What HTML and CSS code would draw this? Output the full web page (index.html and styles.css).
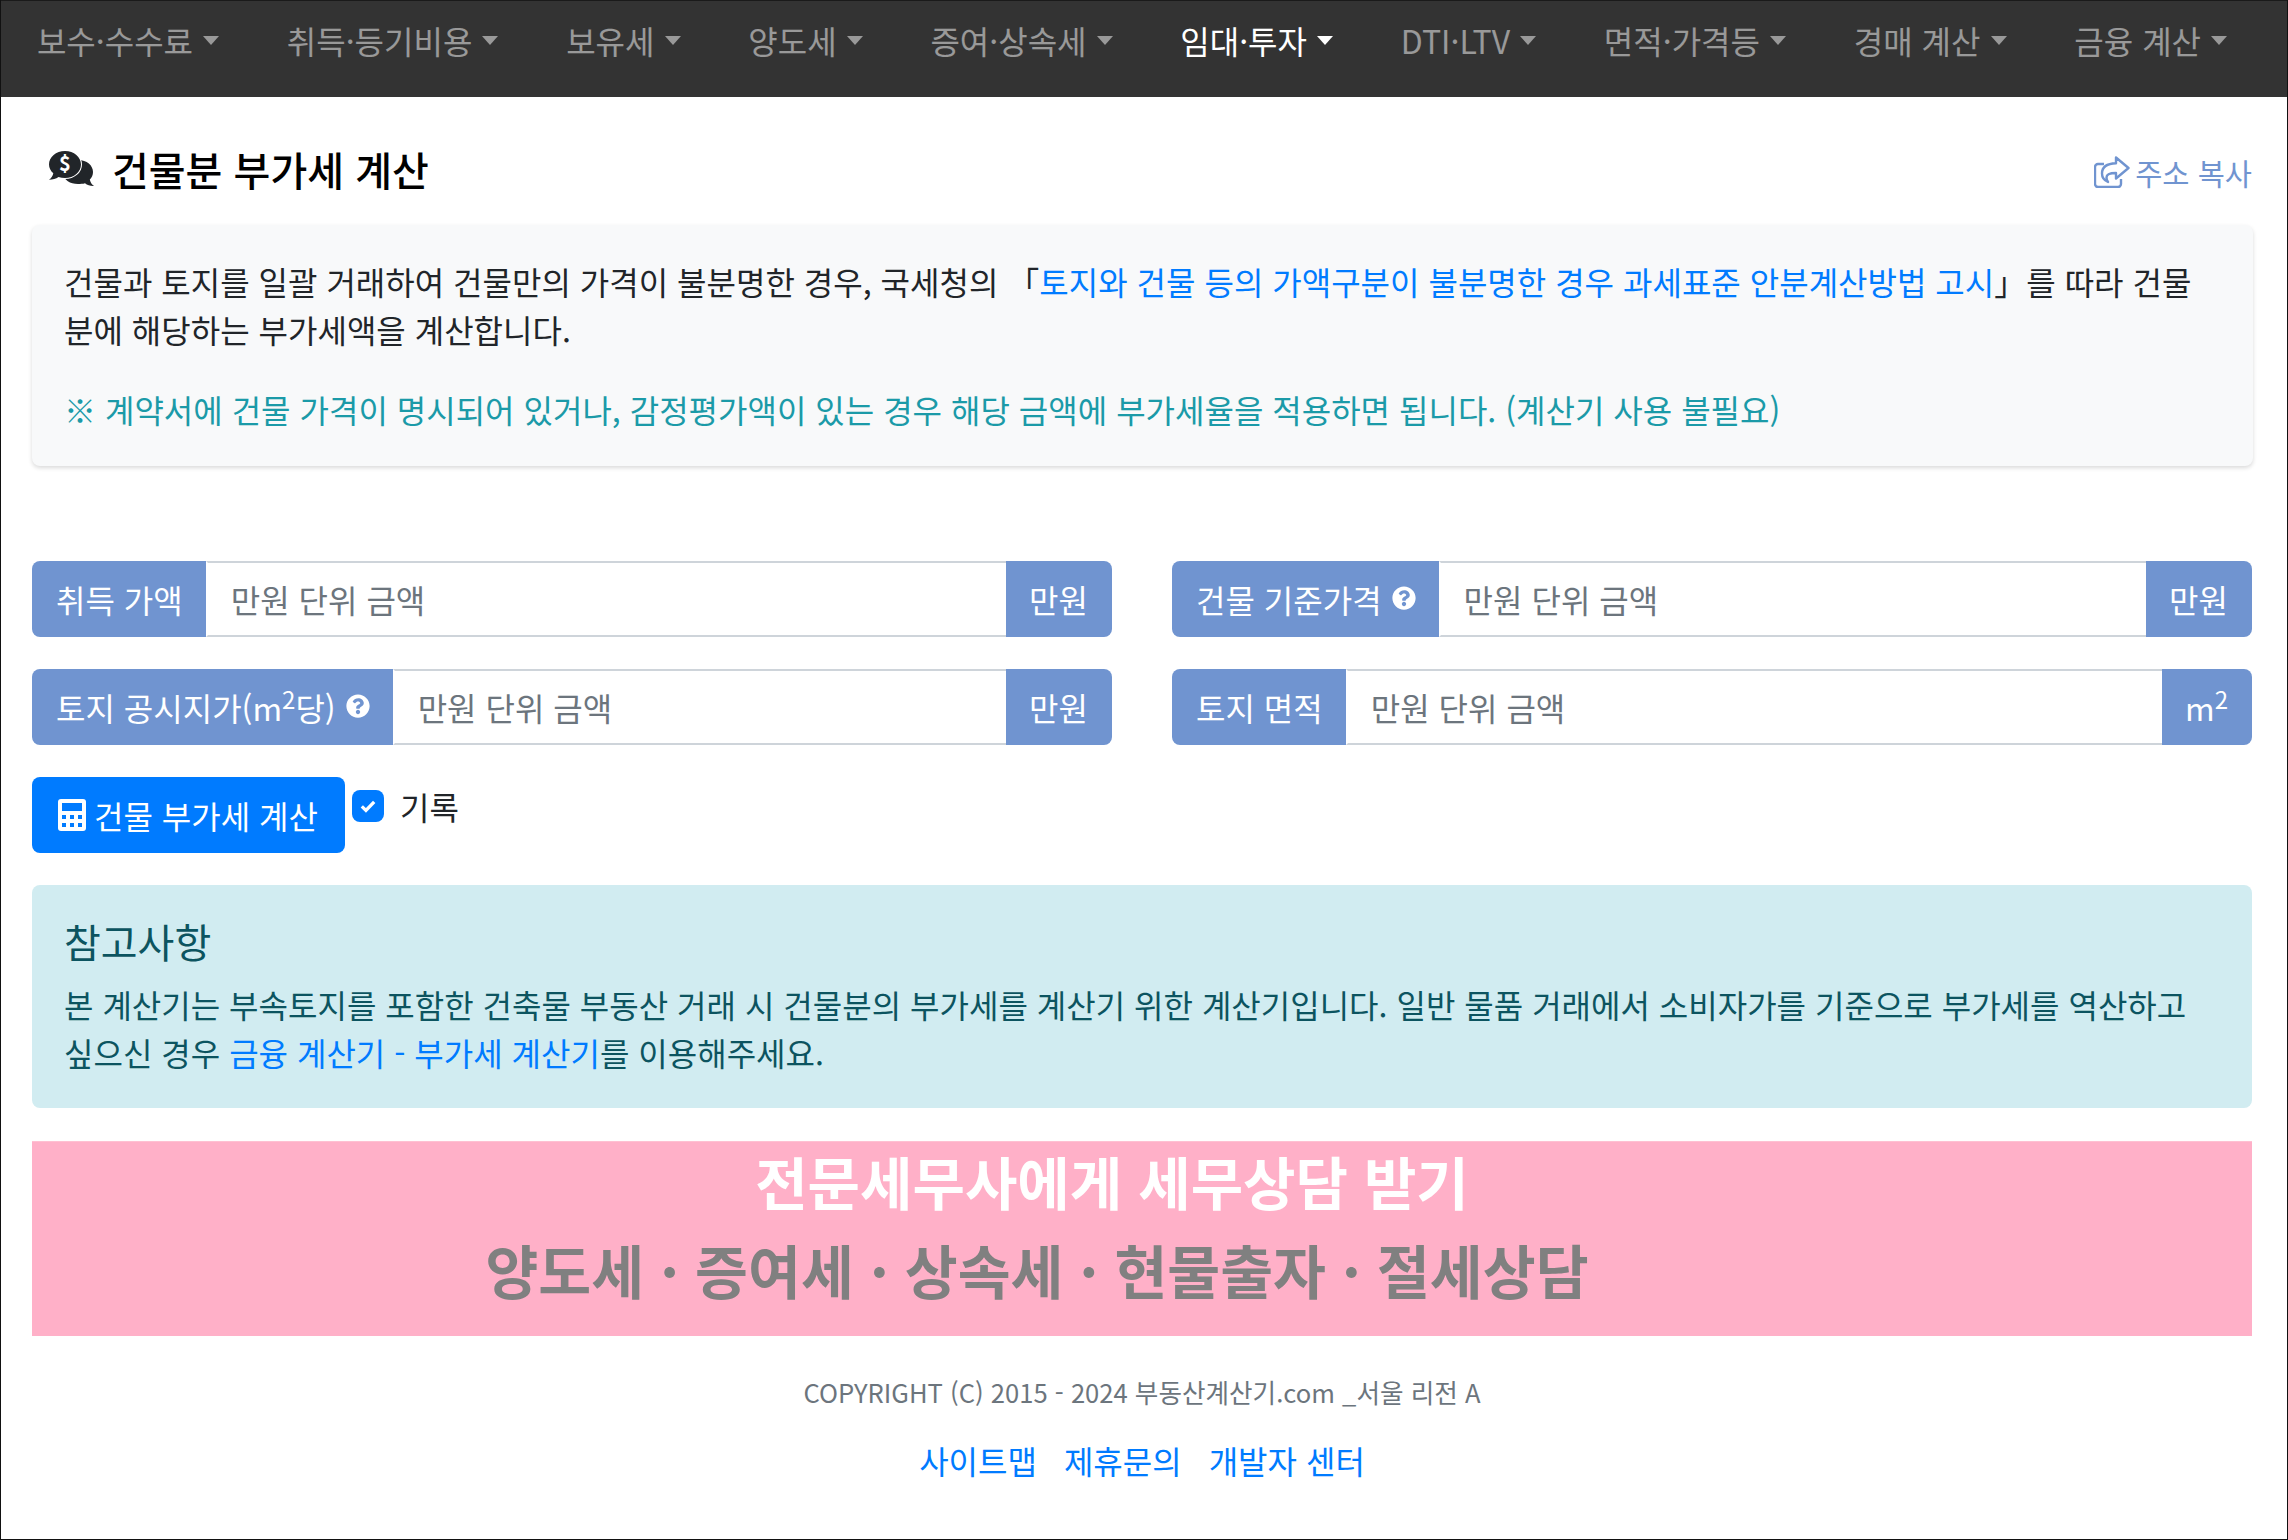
FILE: index.html
```html
<!DOCTYPE html>
<html lang="ko">
<head>
<meta charset="utf-8">
<title>건물분 부가세 계산</title>
<link rel="stylesheet" href="styles.css">
</head>
<body>
<nav class="navbar">
  <a class="nav-link" href="#">보수·수수료</a>
  <a class="nav-link" href="#">취득·등기비용</a>
  <a class="nav-link" href="#">보유세</a>
  <a class="nav-link" href="#">양도세</a>
  <a class="nav-link" href="#">증여·상속세</a>
  <a class="nav-link active" href="#">임대·투자</a>
  <a class="nav-link" href="#">DTI·LTV</a>
  <a class="nav-link" href="#">면적·가격등</a>
  <a class="nav-link" href="#">경매 계산</a>
  <a class="nav-link" href="#">금융 계산</a>
</nav>
<main class="main">
  <header class="title-row">
    <h1 class="title">
      <svg class="title-icon" viewBox="0 0 45 36" aria-hidden="true">
        <path class="bubble-dark" d="M29 9c9 0 15 5.500 15 12 0 3-1.200 5.500-3.200 7.500.4 2.500 2 5 4.200 6.500-3.500.2-6.700-1-9-2.800-2 .6-4.600.8-7 .8-8 0-14-4-15-10z"/>
        <path class="bubble-gap" d="M16 0c9 0 16 6 16 13.500S25 27 16 27c-2.300 0-4.500-.3-6.500-1-2.500 1.800-5.800 2.800-9.500 2.800 2.300-1.600 4-4 4.300-6.500C1.700 20 0 17 0 13.500 0 6 7 0 16 0z"/>
        <text class="dollar" x="16" y="20" text-anchor="middle">$</text>
      </svg>
      <span>건물분 부가세 계산</span>
    </h1>
    <a class="copy-link" href="#">
      <svg class="copy-icon" viewBox="0 0 36 32" aria-hidden="true">
        <path d="M10 8H4a3 3 0 0 0-3 3v17a3 3 0 0 0 3 3h20a3 3 0 0 0 3-3v-5" fill="none" stroke="currentColor" stroke-width="2.400"/>
        <path d="M22 1.500 34.500 12 22 22.500V17c-5.500 0-9.500 1-9.500 4.500 0 1.500.5 3 1.500 4.500-3.500-1.500-6-5-6-8.500C8 10 15 7.500 22 7.300z" fill="none" stroke="currentColor" stroke-width="2.400" stroke-linejoin="round"/>
      </svg>
      <span>주소 복사</span>
    </a>
  </header>

  <section class="intro-card">
    <p class="intro-text">건물과 토지를 일괄 거래하여 건물만의 가격이 불분명한 경우, 국세청의 「<a class="link" href="#">토지와 건물 등의 가액구분이 불분명한 경우 과세표준 안분계산방법 고시</a>」를 따라 건물분에 해당하는 부가세액을 계산합니다.</p>
    <p class="intro-note">※ 계약서에 건물 가격이 명시되어 있거나, 감정평가액이 있는 경우 해당 금액에 부가세율을 적용하면 됩니다. (계산기 사용 불필요)</p>
  </section>

  <form class="calc-form">
    <div class="input-group">
      <span class="addon addon-left"><span>취득 가액</span></span>
      <input class="field" type="text" placeholder="만원 단위 금액">
      <span class="addon addon-right"><span>만원</span></span>
    </div>
    <div class="input-group">
      <span class="addon addon-left"><span>건물 기준가격</span>
        <svg class="help-icon" viewBox="0 0 512 512" aria-hidden="true"><path d="M504 256c0 136.997-111.043 248-248 248S8 392.997 8 256C8 119.083 119.043 8 256 8s248 111.083 248 248zM262.655 90c-54.497 0-89.255 22.957-116.549 63.758-3.536 5.286-2.353 12.415 2.715 16.258l34.699 26.31c5.205 3.947 12.621 3.008 16.665-2.122 17.864-22.658 30.113-35.797 57.303-35.797 20.429 0 45.698 13.148 45.698 32.958 0 14.976-12.363 22.667-32.534 33.976C247.128 238.528 216 254.941 216 296v4c0 6.627 5.373 12 12 12h56c6.627 0 12-5.373 12-12v-1.333c0-28.462 83.186-29.647 83.186-106.667 0-58.002-60.165-102-116.531-102zM256 338c-25.365 0-46 20.635-46 46 0 25.364 20.635 46 46 46s46-20.636 46-46c0-25.365-20.635-46-46-46z"/></svg>
      </span>
      <input class="field" type="text" placeholder="만원 단위 금액">
      <span class="addon addon-right"><span>만원</span></span>
    </div>
    <div class="input-group">
      <span class="addon addon-left"><span>토지 공시지가(m<sup>2</sup>당)</span>
        <svg class="help-icon" viewBox="0 0 512 512" aria-hidden="true"><path d="M504 256c0 136.997-111.043 248-248 248S8 392.997 8 256C8 119.083 119.043 8 256 8s248 111.083 248 248zM262.655 90c-54.497 0-89.255 22.957-116.549 63.758-3.536 5.286-2.353 12.415 2.715 16.258l34.699 26.31c5.205 3.947 12.621 3.008 16.665-2.122 17.864-22.658 30.113-35.797 57.303-35.797 20.429 0 45.698 13.148 45.698 32.958 0 14.976-12.363 22.667-32.534 33.976C247.128 238.528 216 254.941 216 296v4c0 6.627 5.373 12 12 12h56c6.627 0 12-5.373 12-12v-1.333c0-28.462 83.186-29.647 83.186-106.667 0-58.002-60.165-102-116.531-102zM256 338c-25.365 0-46 20.635-46 46 0 25.364 20.635 46 46 46s46-20.636 46-46c0-25.365-20.635-46-46-46z"/></svg>
      </span>
      <input class="field" type="text" placeholder="만원 단위 금액">
      <span class="addon addon-right"><span>만원</span></span>
    </div>
    <div class="input-group">
      <span class="addon addon-left"><span>토지 면적</span></span>
      <input class="field" type="text" placeholder="만원 단위 금액">
      <span class="addon addon-right"><span>m<sup>2</sup></span></span>
    </div>
  </form>

  <div class="action-row">
    <button class="btn-primary" type="button">
      <svg class="calc-icon" viewBox="0 0 448 512" aria-hidden="true">
        <rect width="448" height="512" rx="48" fill="#fff"/>
        <rect x="64" y="64" width="320" height="128" fill="#007bff"/>
        <rect x="64" y="256" width="64" height="64" fill="#007bff"/>
        <rect x="192" y="256" width="64" height="64" fill="#007bff"/>
        <rect x="320" y="256" width="64" height="64" fill="#007bff"/>
        <rect x="64" y="384" width="64" height="64" fill="#007bff"/>
        <rect x="192" y="384" width="64" height="64" fill="#007bff"/>
        <rect x="320" y="384" width="64" height="64" fill="#007bff"/>
      </svg>
      <span>건물 부가세 계산</span>
    </button>
    <label class="record">
      <span class="checkbox">
        <svg viewBox="0 0 16 16" aria-hidden="true"><path d="M3.500 8.300 6.500 11.200 12.500 5" fill="none" stroke="#fff" stroke-width="2.400"/></svg>
      </span>
      <span>기록</span>
    </label>
  </div>

  <section class="notice">
    <h2 class="notice-title">참고사항</h2>
    <p class="notice-text">본 계산기는 부속토지를 포함한 건축물 부동산 거래 시 건물분의 부가세를 계산기 위한 계산기입니다. 일반 물품 거래에서 소비자가를 기준으로 부가세를 역산하고 싶으신 경우 <a class="link" href="#">금융 계산기 - 부가세 계산기</a>를 이용해주세요.</p>
  </section>

  <a class="banner" href="#">
    <span class="banner-top">전문세무사에게 세무상담 받기</span>
    <span class="banner-bottom">양도세 · 증여세 · 상속세 · 현물출자 · 절세상담</span>
  </a>

  <footer class="footer">
    <p class="copyright">COPYRIGHT (C) 2015 - 2024 부동산계산기.com _서울 리전 A</p>
    <p class="footer-links">
      <a class="link" href="#">사이트맵</a>
      <a class="link" href="#">제휴문의</a>
      <a class="link" href="#">개발자 센터</a>
    </p>
  </footer>
</main>
</body>
</html>
```

FILE: styles.css
```css
* { box-sizing: border-box; }
html, body { margin: 0; padding: 0; }
body {
  height: 1540px;
  overflow: hidden;
  border: 1px solid #111;
  border-top: 0;
  background: #fff;
  color: #212529;
  font-family: "Noto Sans CJK KR", "Noto Sans", sans-serif;
  font-size: 32px;
  line-height: 48px;
}
p { margin: 0; }
a { text-decoration: none; }
.link { color: #007bff; }
sup { font-size: 75%; line-height: 0; position: relative; top: -0.5em; vertical-align: baseline; }

.navbar {
  display: flex;
  align-items: center;
  height: 97px;
  padding: 0 0 18px 2px;
  background: #333;
  border-top: 1px solid #1a1a1a;
}
.nav-link {
  display: flex;
  align-items: center;
  padding: 0 33.900px;
  color: rgba(255, 255, 255, 0.5);
  white-space: nowrap;
}
.nav-link::after {
  content: "";
  margin-left: 10px;
  border-top: 9px solid currentColor;
  border-left: 8px solid transparent;
  border-right: 8px solid transparent;
}
.nav-link.active { color: #fff; }

.main { padding: 48px 35px 0 31px; }

.title-row { display: flex; justify-content: space-between; align-items: flex-start; height: 80px; }
.title {
  display: flex;
  align-items: center;
  gap: 18px;
  margin: 0 0 0 17px;
  font-size: 40px;
  font-weight: 500;
  line-height: 48px;
  color: #000;
}
.title-icon { width: 45px; height: 36px; overflow: visible; }
.bubble-dark { fill: #212529; }
.bubble-gap { fill: #212529; stroke: #fff; stroke-width: 2; paint-order: stroke; }
.dollar { fill: #fff; font-size: 20px; font-weight: 700; }

.copy-link { display: flex; align-items: center; gap: 5px; margin-top: 3px; color: #7094d0; font-size: 29.500px; }
.copy-icon { width: 36px; height: 32px; }

.intro-card {
  padding: 32px 36px 32px 32px;
  height: 241px;
  background: #f8f9fa;
  border-radius: 8px;
  box-shadow: 0 2px 4px rgba(0, 0, 0, 0.15);
  margin-right: -1px;
}
.intro-text { word-break: break-all; margin-bottom: 32px; }
.intro-note { color: #1b9aa8; }

.calc-form {
  display: grid;
  grid-template-columns: 1fr 1fr;
  gap: 32px 60px;
  margin-top: 95px;
}
.input-group { display: flex; height: 76px; }
.addon {
  display: flex;
  align-items: center;
  flex: none;
  background: #7094d0;
  color: #fff;
  white-space: nowrap;
}
.addon-left { padding: 0 23px 0 24px; border-radius: 8px 0 0 8px; }
.addon-right { padding: 0 24px 0 23px; border-radius: 0 8px 8px 0; }
.help-icon { width: 24px; height: 24px; margin-left: 10px; margin-top: -2px; fill: #fff; }
.field {
  flex: 1;
  min-width: 0;
  padding: 0 24px 0 23px;
  border: 2px solid #ced4da;
  border-width: 2px 0;
  border-left: 2px solid #fff;
  font: inherit;
  color: #495057;
  outline: none;
}
.field::placeholder { color: #6c757d; opacity: 1; }

.action-row { display: flex; margin-top: 32px; align-items: flex-start; }
.btn-primary {
  display: flex;
  align-items: center;
  gap: 8px;
  height: 76px;
  padding: 0 27px 0 26px;
  border: 0;
  border-radius: 8px;
  background: #007bff;
  color: #fff;
  font: inherit;
}
.calc-icon { width: 28px; height: 32px; }
.record { display: flex; align-items: center; gap: 16px; margin: 5px 0 0 7px; color: #212529; }
.checkbox {
  display: flex;
  align-items: center;
  justify-content: center;
  width: 32px;
  height: 32px;
  border-radius: 8px;
  background: #007bff;
}
.checkbox svg { width: 22px; height: 22px; }

.notice {
  margin-top: 32px;
  padding: 32px 32px 32px;
  background: #d1ecf1;
  border-radius: 8px;
  color: #0c5460;
}
.notice-title { margin: 0 0 15px; font-size: 40px; font-weight: 400; line-height: 48px; }
.notice-text { color: #0c5460; }

.banner {
  display: flex;
  flex-direction: column;
  align-items: center;
  height: 195px;
  margin-top: 33px;
  background: #ffb0c8;
  border-top: 1px solid #ffc0d2;
  font-weight: 700;
}
.banner-top { margin: 3px 60px 0 0; color: #fff; font-size: 57px; line-height: 70px; }
.banner-bottom { margin: 14px 210px 0 0; color: #808080; font-size: 57.500px; line-height: 80px; }

.footer { text-align: center; color: #6c757d; }
.copyright { margin: 32px 0 0; font-size: 25.600px; line-height: 48px; }
.footer-links { margin-top: 20px; display: flex; justify-content: center; gap: 27px; }
```
